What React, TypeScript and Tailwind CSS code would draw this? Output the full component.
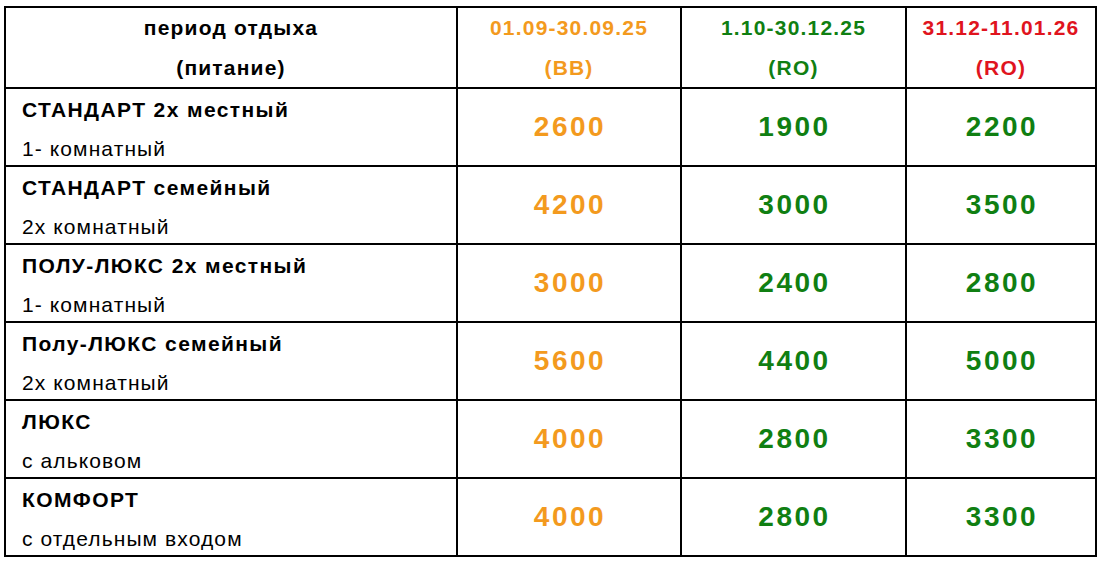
const orange = "text-[#f39a1e]";
const green = "text-[#107f12]";
const red = "text-[#e0141e]";

type Row = { name: string; sub: string; prices: [string, string, string] };

const rows: Row[] = [
  { name: "СТАНДАРТ 2х местный", sub: "1- комнатный", prices: ["2600", "1900", "2200"] },
  { name: "СТАНДАРТ семейный", sub: "2х комнатный", prices: ["4200", "3000", "3500"] },
  { name: "ПОЛУ-ЛЮКС 2х местный", sub: "1- комнатный", prices: ["3000", "2400", "2800"] },
  { name: "Полу-ЛЮКС семейный", sub: "2х комнатный", prices: ["5600", "4400", "5000"] },
  { name: "ЛЮКС", sub: "с альковом", prices: ["4000", "2800", "3300"] },
  { name: "КОМФОРТ", sub: "с отдельным входом", prices: ["4000", "2800", "3300"] },
];

const priceColors = [orange, green, green];

function HeaderCell({ top, bottom, color }: { top: string; bottom: string; color: string }) {
  return (
    <div className={`flex flex-col items-center justify-center bg-white text-[21px] leading-[40px] font-bold tracking-[1.2px] ${color}`}>
      <span>{top}</span>
      <span>{bottom}</span>
    </div>
  );
}

export default function App() {
  return (
    <div className="min-h-[563px] bg-white pl-[4px] pt-[6px] font-['Liberation_Sans',Arial,sans-serif]">
      <div className="grid w-[1093px] grid-cols-[450px_222px_223px_188px] grid-rows-[79px_repeat(6,76px)] gap-[2px] border-2 border-black bg-black">
        <HeaderCell top="период отдыха" bottom="(питание)" color="text-black" />
        <HeaderCell top="01.09-30.09.25" bottom="(BB)" color={orange} />
        <HeaderCell top="1.10-30.12.25" bottom="(RO)" color={green} />
        <HeaderCell top="31.12-11.01.26" bottom="(RO)" color={red} />

        {rows.map((r, i) => (
          <>
            <div key={`n${i}`} className="flex flex-col justify-center bg-white pl-[16px] pt-[3px] text-[21px] leading-[39px] text-black">
              <span className="font-bold tracking-[1.4px]">{r.name}</span>
              <span className="tracking-[1.1px]">{r.sub}</span>
            </div>
            {r.prices.map((p, j) => (
              <div
                key={`p${i}${j}`}
                className={`flex items-center justify-center bg-white pl-[2px] text-[28px] font-bold tracking-[2.5px] ${priceColors[j]}`}
              >
                {p}
              </div>
            ))}
          </>
        ))}
      </div>
    </div>
  );
}
